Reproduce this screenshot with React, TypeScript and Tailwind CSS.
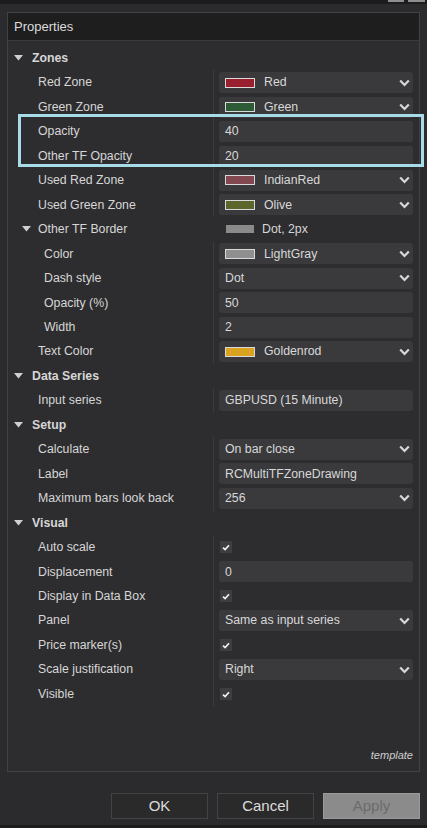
import React from "react";

type Row =
  | { kind: "section"; label: string }
  | { kind: "group"; label: string; swatch: string; value: string }
  | {
      kind: "prop";
      label: string;
      indent?: boolean;
      value?: string;
      swatch?: string;
      select?: boolean;
      check?: boolean;
    };

const rows: Row[] = [
  { kind: "section", label: "Zones" },
  { kind: "prop", label: "Red Zone", swatch: "#9a1f2e", value: "Red", select: true },
  { kind: "prop", label: "Green Zone", swatch: "#2b5c35", value: "Green", select: true },
  { kind: "prop", label: "Opacity", value: "40" },
  { kind: "prop", label: "Other TF Opacity", value: "20" },
  { kind: "prop", label: "Used Red Zone", swatch: "#824850", value: "IndianRed", select: true },
  { kind: "prop", label: "Used Green Zone", swatch: "#5c652c", value: "Olive", select: true },
  { kind: "group", label: "Other TF Border", swatch: "#8a8a8a", value: "Dot, 2px" },
  { kind: "prop", label: "Color", indent: true, swatch: "#8f8f8f", value: "LightGray", select: true },
  { kind: "prop", label: "Dash style", indent: true, value: "Dot", select: true },
  { kind: "prop", label: "Opacity (%)", indent: true, value: "50" },
  { kind: "prop", label: "Width", indent: true, value: "2" },
  { kind: "prop", label: "Text Color", swatch: "#d9a220", value: "Goldenrod", select: true },
  { kind: "section", label: "Data Series" },
  { kind: "prop", label: "Input series", value: "GBPUSD (15 Minute)" },
  { kind: "section", label: "Setup" },
  { kind: "prop", label: "Calculate", value: "On bar close", select: true },
  { kind: "prop", label: "Label", value: "RCMultiTFZoneDrawing" },
  { kind: "prop", label: "Maximum bars look back", value: "256", select: true },
  { kind: "section", label: "Visual" },
  { kind: "prop", label: "Auto scale", check: true },
  { kind: "prop", label: "Displacement", value: "0" },
  { kind: "prop", label: "Display in Data Box", check: true },
  { kind: "prop", label: "Panel", value: "Same as input series", select: true },
  { kind: "prop", label: "Price marker(s)", check: true },
  { kind: "prop", label: "Scale justification", value: "Right", select: true },
  { kind: "prop", label: "Visible", check: true },
];

function Triangle() {
  return (
    <svg width="9" height="6" viewBox="0 0 9 6" className="shrink-0">
      <path d="M0 0 L9 0 L4.5 5.5 Z" fill="#cfcfcf" />
    </svg>
  );
}

function Chevron() {
  return (
    <svg width="11" height="8" viewBox="0 0 11 8" className="ml-auto mr-[3px] shrink-0">
      <path d="M1.2 1.5 L5.5 6 L9.8 1.5" fill="none" stroke="#d8d8d8" strokeWidth="2.2" />
    </svg>
  );
}

function Swatch({ color, bordered = true }: { color: string; bordered?: boolean }) {
  return (
    <span
      className={`block shrink-0 ${bordered ? "h-[10px] w-[30px] border border-[#d9d9d9]" : "h-[8px] w-[28px]"}`}
      style={{ backgroundColor: color }}
    />
  );
}

function Check() {
  return (
    <span className="flex h-[12px] w-[12px] items-center justify-center bg-[#3e3e41]">
      <svg width="8" height="7" viewBox="0 0 8 7">
        <path d="M1 3.6 L3.1 5.6 L7 1.2" fill="none" stroke="#f0f0f0" strokeWidth="1.7" />
      </svg>
    </span>
  );
}

function PropertyRow({ row }: { row: Row }) {
  if (row.kind === "section") {
    return (
      <div className="flex h-[24.46px] items-center pl-[6px]">
        <Triangle />
        <span className="ml-[9px] text-[12.3px] font-bold text-[#d6d6d6]">{row.label}</span>
      </div>
    );
  }
  if (row.kind === "group") {
    return (
      <div className="flex h-[24.46px] items-center">
        <div className="flex w-[205px] items-center pl-[14px]">
          <Triangle />
          <span className="ml-[7px] text-[12.3px] text-[#d6d6d6]">{row.label}</span>
        </div>
        <div className="flex items-center gap-[8px] pl-[13px]">
          <Swatch color={row.swatch} bordered={false} />
          <span className="text-[12.3px] text-[#d6d6d6]">{row.value}</span>
        </div>
      </div>
    );
  }
  return (
    <div className="flex h-[24.46px] items-center">
      <div className={`w-[205px] text-[12.3px] text-[#d6d6d6] ${row.indent ? "pl-[36px]" : "pl-[30px]"}`}>
        {row.label}
      </div>
      <div className="flex h-full flex-1 items-center border-l border-[#3a3a3c] pl-[5px] pr-[6px]">
        {row.check ? (
          <div className="pl-[1px]">
            <Check />
          </div>
        ) : (
          <div className="flex h-[21px] w-full items-center rounded-[3px] bg-[#3a3a3d] pl-[6px]">
            {row.swatch && (
              <span className="mr-[9px]">
                <Swatch color={row.swatch} />
              </span>
            )}
            <span className="text-[12.3px] text-[#d8d8d8]">{row.value}</span>
            {row.select && <Chevron />}
          </div>
        )}
      </div>
    </div>
  );
}

export default function App() {
  return (
    <div
      className="relative flex h-[828px] w-[427px] flex-col overflow-hidden bg-[#2b2b2d]"
      style={{ fontFamily: '"Liberation Sans", Arial, sans-serif' }}
    >
      <div className="flex h-[4px] justify-end gap-[4px] bg-[#1c1c1c] pr-[2px]">
        <span className="h-[2px] w-[16px] bg-[#8e8e8e]" />
        <span className="h-[2px] w-[17px] bg-[#8e8e8e]" />
      </div>

      <div className="mx-[7px] mt-[8px] flex h-[760px] flex-col border border-[#424244]">
        <div className="flex h-[28px] items-center border-b border-[#3c3c3e] bg-[#1e1e1f] pl-[6px] text-[13px] text-[#dcdcdc]">
          Properties
        </div>
        <div className="relative flex flex-1 flex-col bg-[#2d2d2f] pt-[5px]">
          {rows.map((row, i) => (
            <PropertyRow key={i} row={row} />
          ))}
          <div className="mt-auto pb-[8px] pr-[6px] text-right text-[11px] italic text-[#cfcfcf]">template</div>
        </div>
      </div>

      <div className="mt-[21px] flex justify-end gap-[9px] pr-[7px]">
        <button className="h-[26px] w-[97px] border border-[#434345] bg-[#2a2a2b] text-[15px] text-[#dcdcdc]">OK</button>
        <button className="h-[26px] w-[97px] border border-[#434345] bg-[#2a2a2b] text-[15px] text-[#dcdcdc]">Cancel</button>
        <button className="h-[26px] w-[97px] border border-[#9a9a9a] bg-[#8b8b8b] text-[15px] text-[#6c6c6c]">Apply</button>
      </div>

      <div className="mt-auto h-[3px] bg-[#1c1c1c]" />

      <div className="absolute left-[18px] top-[114px] h-[53px] w-[406px] border-[3px] border-[#a6dbe7]" />
    </div>
  );
}
